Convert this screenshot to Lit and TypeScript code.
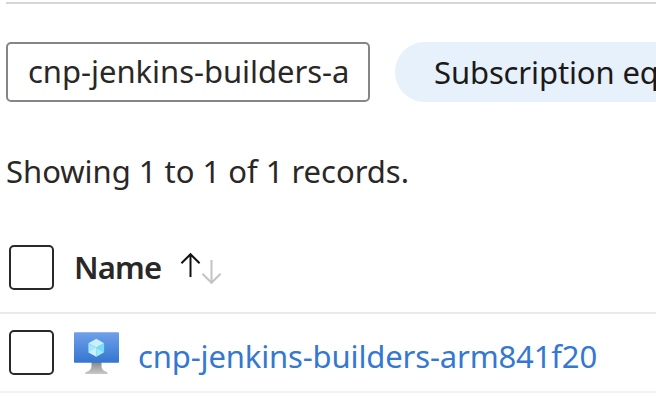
import { LitElement, html, css } from "lit";
import { customElement } from "lit/decorators.js";

@customElement("vm-icon")
class VmIcon extends LitElement {
  static styles = css`
    :host { display: block; width: 45px; height: 43px; }
    svg { display: block; }
  `;
  render() {
    return html`<svg width="45" height="43" viewBox="0 0 45 43">
      <defs>
        <linearGradient id="screen" x1="0" y1="0" x2="0" y2="1">
          <stop offset="0" stop-color="#70a0ea" />
          <stop offset="1" stop-color="#3376cf" />
        </linearGradient>
        <linearGradient id="stand" x1="0" y1="0" x2="0" y2="1">
          <stop offset="0" stop-color="#858585" />
          <stop offset="0.4" stop-color="#a3a3a3" />
          <stop offset="1" stop-color="#c8c8c8" />
        </linearGradient>
      </defs>
      <path fill="url(#stand)" d="M17.5 30H27.5V33.5C27.5 37.5 29.5 39 32.5 39.7Q33.7 40.2 33.7 42H11.2Q11.2 40.2 12.4 39.7C15.5 39 17.5 37.5 17.5 33.5Z" />
      <rect y="0.3" width="45" height="30.5" rx="0.8" fill="url(#screen)" />
      <path fill="#c9f0fd" d="M22.4 6.7L30.1 11.2L22.4 15.5L14.4 11.2Z" />
      <path fill="#9feafb" d="M14.4 11.2L22.4 15.5V24.8L14.4 20.2Z" />
      <path fill="#75def9" d="M30.1 11.2V20.2L22.4 15.5Z" />
      <path fill="#c9f0fd" d="M22.4 15.5V24.8L14.4 20.2Z" />
      <path fill="#9feafb" d="M22.4 15.5L30.1 20.2L22.4 24.8Z" />
    </svg>`;
  }
}

@customElement("app-root")
class AppRoot extends LitElement {
  static styles = css`
    :host {
      display: block;
      height: 418px;
      overflow: hidden;
      background: #fff;
      color: #292827;
      font: 31px/40px "Noto Sans", "Open Sans", sans-serif;
      white-space: nowrap;
    }
    * { box-sizing: border-box; }
    .page { display: flex; flex-direction: column; padding-top: 2px; }
    .rule { height: 2px; margin-left: 6px; background: #d6d6d6; }
    .filters { display: flex; gap: 25px; margin: 38px 0 0 6px; }
    .search {
      flex: none; width: 364px; height: 60px; padding: 7px 0 0 20px;
      border: 2px solid #868686; border-radius: 5px; overflow: hidden;
      letter-spacing: -0.03px;
    }
    .pill {
      flex: none; width: 400px; height: 60px; padding: 10px 0 0 39px;
      border-radius: 30px; background: #e6f1fb; color: #1b1a19;
      letter-spacing: -0.12px;
    }
    .count { height: 40px; margin: 49px 0 0 6px; letter-spacing: -0.02px; }
    .row { display: flex; padding-left: 9px; }
    .head { height: 123px; padding-top: 54px; border-bottom: 2px solid #eaeaea; }
    .item { height: 79px; padding-top: 16px; border-bottom: 2px solid #f2f2f2; }
    .box { flex: none; width: 45px; height: 45px; border: 2px solid #292929; border-radius: 5px; }
    .name { margin: 2px 0 0 20px; font-weight: 600; width: 87px; letter-spacing: -0.85px; }
    .sort { margin: 7px 0 0 19px; }
    vm-icon { flex: none; margin: 2px 0 0 20px; }
    .link { margin: 6px 0 0 19px; color: #3478d1; letter-spacing: -0.14px; }
  `;
  render() {
    return html`<div class="page">
      <div class="rule"></div>
      <div class="filters">
        <div class="search">cnp-jenkins-builders-a</div>
        <div class="pill"><span>Subscription eq</span></div>
      </div>
      <div class="count"><span>Showing 1 to 1 of 1 records.</span></div>
      <div class="row head">
        <div class="box"></div>
        <div class="name">Name</div>
        <svg class="sort" width="42" height="34" viewBox="0 0 42 34" fill="none" stroke-width="2">
          <path stroke="#111" d="M10.5 25V2.5M1.4 11.3L10.5 2.2L19.6 11.3" />
          <path stroke="#c4c4c4" d="M31.5 8V30.5M22.4 21.7L31.5 30.8L40.6 21.7" />
        </svg>
      </div>
      <div class="row item">
        <div class="box"></div>
        <vm-icon></vm-icon>
        <div class="link">cnp-jenkins-builders-arm841f20</div>
      </div>
    </div>`;
  }
}
